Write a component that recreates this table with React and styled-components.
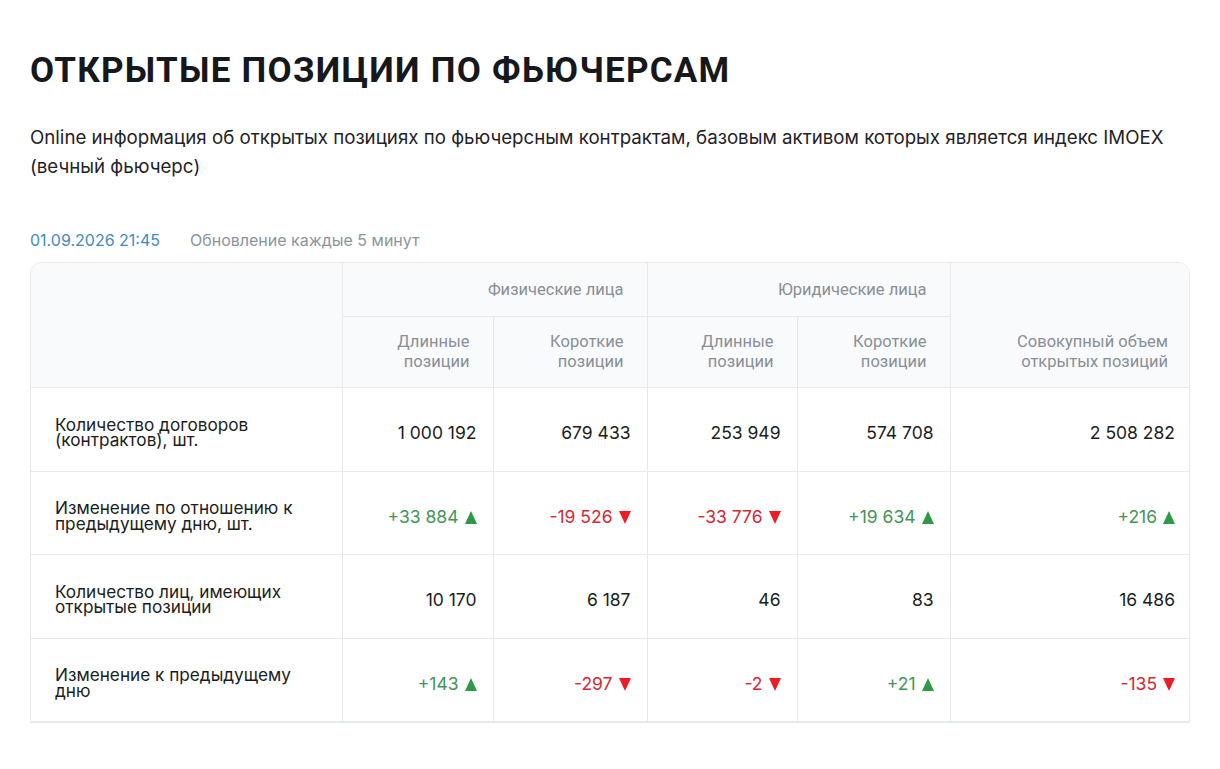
import React from "react";
import styled, { createGlobalStyle } from "styled-components";

const GlobalStyle = createGlobalStyle`
  body {
    margin: 0;
    background: #ffffff;
    font-family: Inter, "Noto Sans", Arial, sans-serif;
    color: #1b1d21;
  }
`;

const Page = styled.div`
  padding: 50px 30px 0 30px;
  width: 1160px;
`;
const Title = styled.h1`
  margin: 0;
  font-family: Roboto, "Liberation Sans", sans-serif;
  font-weight: 700;
  font-size: 35px;
  line-height: 42px;
  letter-spacing: 1.25px;
  color: #16181c;
`;
const Lead = styled.p`
  margin: 31px 0 0 0;
  font-size: 18.7px;
  line-height: 29px;
  color: #1f2227;
  max-width: 1160px;
`;
const Meta = styled.div`
  display: flex;
  gap: 30px;
  margin-top: 49px;
  font-size: 16px;
  line-height: 20px;
`;
const Stamp = styled.span`
  color: #3f8bbf;
`;
const Note = styled.span`
  color: #8b949c;
`;
const TableWrap = styled.div`
  margin-top: 12px;
  border: 1px solid #e7eaed;
  border-radius: 12px 12px 0 0;
  overflow: hidden;
`;
const Table = styled.table`
  width: 100%;
  border-collapse: collapse;
  table-layout: fixed;
`;
const Head = styled.th`
  background: #f8fafc;
  border: 1px solid #e7eaed;
  border-top: ${(p) => (p.$top ? "none" : "1px solid #e7eaed")};
  font-family: Roboto, "Liberation Sans", sans-serif;
  font-weight: 400;
  font-size: 16.5px;
  line-height: 20px;
  color: #8a8f96;
  text-align: right;
  vertical-align: ${(p) => (p.$low ? "bottom" : "middle")};
  padding: 0 23px ${(p) => (p.$low ? "15px" : "0")} 10px;
  height: ${(p) => p.$h || "auto"};
  &:first-child {
    border-left: none;
  }
  &:last-child {
    border-right: none;
  }
`;
const Label = styled.td`
  border: 1px solid #e7eaed;
  border-left: none;
  padding: 6px 24px 0 24px;
  height: 76.5px;
  font-size: 17.2px;
  line-height: 15.5px;
  color: #1b1d21;
`;
const Cell = styled.td`
  border: 1px solid #e7eaed;
  padding: 7px 16px 0 8px;
  text-align: right;
  font-size: 17.5px;
  color: ${(p) => (p.$tone === "up" ? "#459556" : p.$tone === "down" ? "#d32a33" : "#1b1d21")};
  &:last-child {
    border-right: none;
  }
`;
const Arrow = styled.span`
  display: inline-block;
  margin-left: 6px;
  width: 0;
  height: 0;
  border-left: 6.5px solid transparent;
  border-right: 6.5px solid transparent;
  ${(p) =>
    p.$dir === "up"
      ? "border-bottom: 13px solid #2e9a47;"
      : "border-top: 13px solid #ee1c24;"}
  vertical-align: -1px;
`;
const Next = styled.div`
  margin-top: 42px;
  font-size: 16px;
  color: #3f8bbf;
`;

const cols = ["311px", "151px", "154px", "150px", "153px", "241px"];

const rows = [
  { label: ["Количество договоров", "(контрактов), шт."], values: ["1 000 192", "679 433", "253 949", "574 708", "2 508 282"] },
  { label: ["Изменение по отношению к", "предыдущему дню, шт."], values: ["+33 884", "-19 526", "-33 776", "+19 634", "+216"] },
  { label: ["Количество лиц, имеющих", "открытые позиции"], values: ["10 170", "6 187", "46", "83", "16 486"] },
  { label: ["Изменение к предыдущему", "дню"], values: ["+143", "-297", "-2", "+21", "-135"] },
];

function toneOf(v) {
  if (v.startsWith("+")) return "up";
  if (v.startsWith("-")) return "down";
  return null;
}

export default function App() {
  return (
    <Page>
      <GlobalStyle />
      <Title>ОТКРЫТЫЕ ПОЗИЦИИ ПО ФЬЮЧЕРСАМ</Title>
      <Lead>
        Online информация об открытых позициях по фьючерсным контрактам, базовым активом которых является индекс IMOEX
        (вечный фьючерс)
      </Lead>
      <Meta>
        <Stamp>01.09.2026 21:45</Stamp>
        <Note>Обновление каждые 5 минут</Note>
      </Meta>
      <TableWrap>
        <Table>
          <colgroup>
            {cols.map((w, i) => (
              <col key={i} style={{ width: w }} />
            ))}
          </colgroup>
          <thead>
            <tr>
              <Head rowSpan={2} $top />
              <Head colSpan={2} $top $h="53px">Физические лица</Head>
              <Head colSpan={2} $top $h="53px">Юридические лица</Head>
              <Head rowSpan={2} $top $low>
                Совокупный объем
                <br />
                открытых позиций
              </Head>
            </tr>
            <tr>
              <Head $h="70px">Длинные<br />позиции</Head>
              <Head $h="70px">Короткие<br />позиции</Head>
              <Head $h="70px">Длинные<br />позиции</Head>
              <Head $h="70px">Короткие<br />позиции</Head>
            </tr>
          </thead>
          <tbody>
            {rows.map((r) => (
              <tr key={r.label[0]}>
                <Label>
                  {r.label[0]}
                  <br />
                  {r.label[1]}
                </Label>
                {r.values.map((v, i) => {
                  const tone = toneOf(v);
                  return (
                    <Cell key={i} $tone={tone}>
                      {v}
                      {tone && <Arrow $dir={tone} />}
                    </Cell>
                  );
                })}
              </tr>
            ))}
          </tbody>
        </Table>
      </TableWrap>
      <Next>01.09.2026 21:45</Next>
    </Page>
  );
}
